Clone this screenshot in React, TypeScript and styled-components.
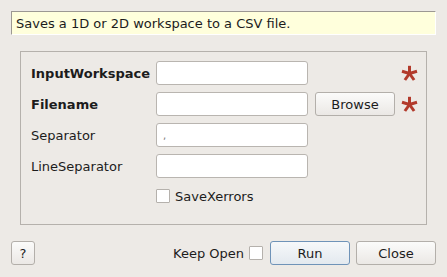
import React from "react";
import styled, { createGlobalStyle } from "styled-components";

const Global = createGlobalStyle`
  html, body { margin: 0; padding: 0; background: #edeae6; }
  body { font-family: "DejaVu Sans", sans-serif; font-size: 13px; color: #1c1c1c; }
  * { box-sizing: border-box; }
`;

const Dialog = styled.div`
  width: 447px;
  height: 277px;
  padding: 11px 11px 0 11px;
  display: flex;
  flex-direction: column;
`;

const Description = styled.div`
  height: 24px;
  background: #ffffdc;
  border-top: 1px solid #9c9893;
  border-left: 1px solid #9c9893;
  border-right: 1px solid #ffffff;
  border-bottom: 1px solid #ffffff;
  padding: 0 0 0 4px;
  display: flex;
  align-items: center;
  white-space: nowrap;
`;

const Group = styled.div`
  margin: 16px 9px 0 9px;
  height: 174px;
  border: 1px solid #b5b1ac;
  padding: 9px 0 0 10px;
  display: grid;
  grid-template-columns: 125px 152px 87px 28px;
  grid-auto-rows: 24px;
  row-gap: 7px;
  align-items: center;
`;

const Label = styled.div<{ $bold?: boolean }>`
  font-weight: ${(p) => (p.$bold ? "bold" : "normal")};
  white-space: nowrap;
  grid-column: 1;
`;

const Input = styled.div`
  grid-column: 2;
  height: 24px;
  background: #ffffff;
  border: 1px solid #b9b5b0;
  border-radius: 3px;
  padding: 0 6px;
  display: flex;
  align-items: center;
  font-size: 10px;
  color: #777;
`;

const Button = styled.button<{ $primary?: boolean }>`
  height: 24px;
  width: 80px;
  font-family: "DejaVu Sans", sans-serif;
  font-size: 13px;
  color: #1c1c1c;
  border-radius: 3px;
  border: 1px solid ${(p) => (p.$primary ? "#6f93b8" : "#b3afaa")};
  background: ${(p) =>
    p.$primary
      ? "linear-gradient(#f6f8fa, #e3e9ef)"
      : "linear-gradient(#fbfbfa, #ebe8e5)"};
  padding: 0;
  display: flex;
  align-items: center;
  justify-content: center;
`;

const BrowseCell = styled.div`
  grid-column: 3;
  padding-left: 7px;
`;

const StarCell = styled.div`
  grid-column: 4;
  display: flex;
  align-items: center;
  padding-left: 6px;
`;

const CheckRow = styled.div`
  grid-column: 2 / span 3;
  display: flex;
  align-items: center;
  gap: 5px;
  margin-top: -2px;
`;

const Box = styled.span`
  width: 14px;
  height: 14px;
  background: #ffffff;
  border: 1px solid #b5b1ac;
  border-radius: 1px;
  display: inline-block;
`;

const Footer = styled.div`
  margin-top: 16px;
  height: 24px;
  display: flex;
  align-items: center;
`;

const HelpButton = styled(Button)`
  width: 24px;
`;

const Spacer = styled.div`
  flex: 1;
`;

const KeepOpen = styled.div`
  display: flex;
  align-items: center;
  gap: 5px;
  margin-right: 7px;
`;

const CloseButton = styled(Button)`
  margin-left: 6px;
`;

const Star = () => (
  <svg width="17" height="16" viewBox="0 0 17 16">
    <g stroke="#b23a2b" strokeWidth="3" strokeLinecap="butt">
      <line x1="8.5" y1="8.5" x2="8.5" y2="0.8" />
      <line x1="8.5" y1="8.5" x2="1" y2="6.2" />
      <line x1="8.5" y1="8.5" x2="16" y2="6.2" />
      <line x1="8.5" y1="8.5" x2="3.9" y2="15" />
      <line x1="8.5" y1="8.5" x2="13.1" y2="15" />
    </g>
  </svg>
);

export default function App() {
  return (
    <>
      <Global />
      <Dialog>
        <Description>Saves a 1D or 2D workspace to a CSV file.</Description>
        <Group>
          <Label $bold>InputWorkspace</Label>
          <Input />
          <div />
          <StarCell>
            <Star />
          </StarCell>

          <Label $bold>Filename</Label>
          <Input />
          <BrowseCell>
            <Button>Browse</Button>
          </BrowseCell>
          <StarCell>
            <Star />
          </StarCell>

          <Label>Separator</Label>
          <Input>,</Input>
          <div />
          <div />

          <Label>LineSeparator</Label>
          <Input />
          <div />
          <div />

          <div />
          <CheckRow>
            <Box />
            <span>SaveXerrors</span>
          </CheckRow>
        </Group>
        <Footer>
          <HelpButton>?</HelpButton>
          <Spacer />
          <KeepOpen>
            <span>Keep Open</span>
            <Box />
          </KeepOpen>
          <Button $primary>Run</Button>
          <CloseButton>Close</CloseButton>
        </Footer>
      </Dialog>
    </>
  );
}
